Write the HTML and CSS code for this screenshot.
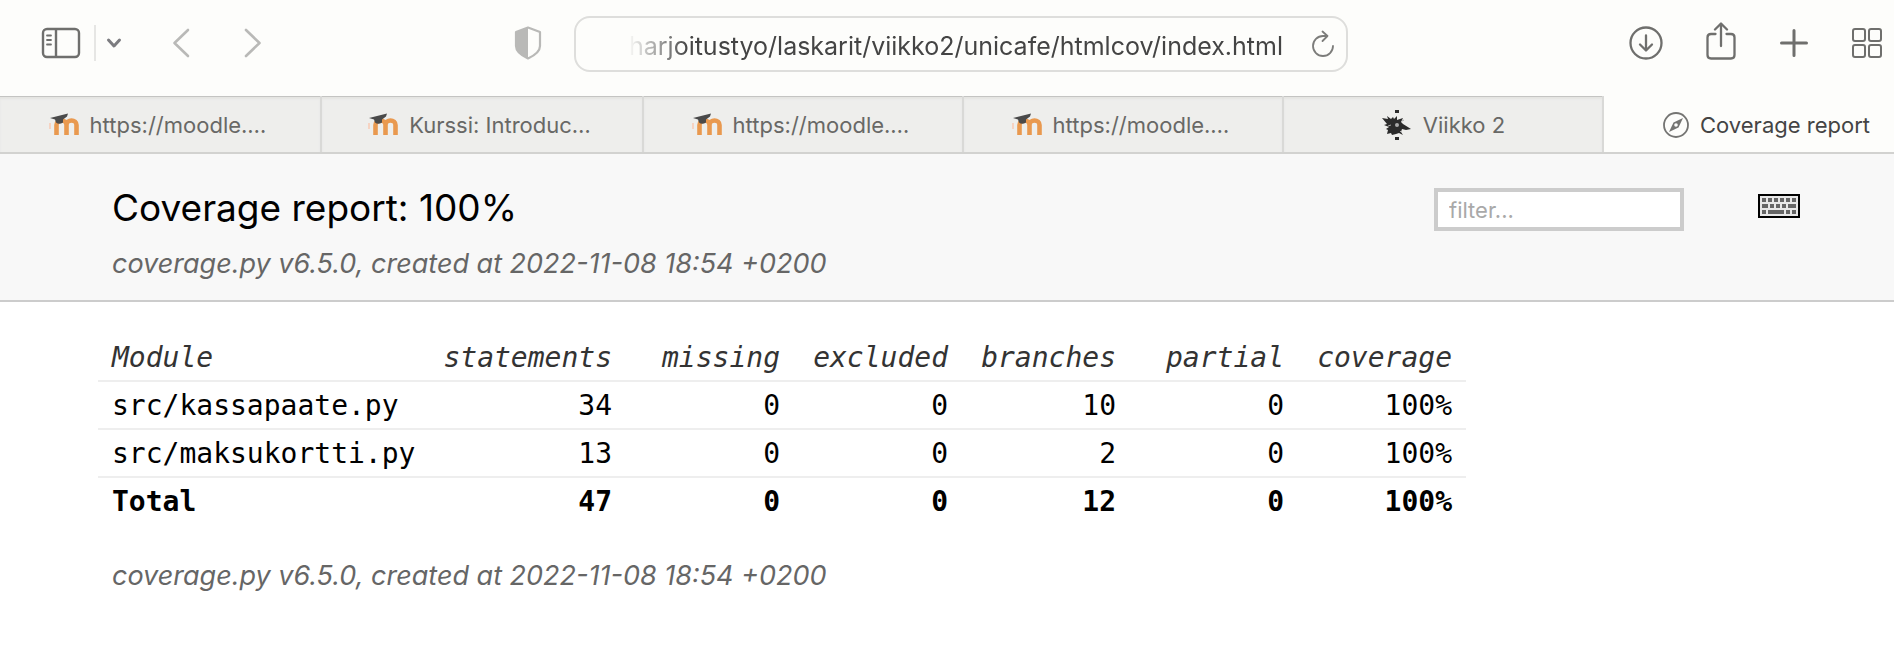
FILE: index.html
```html
<!DOCTYPE html>
<html lang="en">
<head>
<meta charset="utf-8">
<title>Coverage report</title>
<link rel="stylesheet" href="styles.css">
</head>
<body>
<svg class="defs" aria-hidden="true">
  <symbol id="moodle" viewBox="0 0 32 24">
    <path d="M2 10v6" stroke="#f6d3c2" stroke-width="2" fill="none"/>
    <path d="M8.500 22V12M8.500 12a5 4.500 0 0 1 10 0V22M18.500 12a5 4.500 0 0 1 10 0V22" fill="none" stroke="#e9994f" stroke-width="4.600"/>
    <path d="M2 5 20 0.500l-1 3-4 3v3q-4 2.500-7 0l-1-3z" fill="#4a4a4a"/>
  </symbol>
</svg>
<header class="toolbar">
  <div class="tools-left">
    <button class="tool" aria-label="Sidebar"><svg width="40" height="32" viewBox="0 0 40 32"><g fill="none" stroke="#6f6f6d" stroke-width="2.400"><rect x="2" y="2" width="36" height="28" rx="4"/><path d="M15 2v28"/><path d="M6 8.500h4M6 13h4M6 17.500h4" stroke-width="1.800" stroke-linecap="round"/></g></svg></button>
    <span class="rule"></span>
    <button class="tool" aria-label="Tab groups"><svg width="16" height="12" viewBox="0 0 16 12"><path d="M2.500 3 8 9l5.500-6" fill="none" stroke="#7c7c80" stroke-width="3" stroke-linecap="round" stroke-linejoin="round"/></svg></button>
    <button class="tool back" aria-label="Back"><svg width="18" height="30" viewBox="0 0 18 30"><path d="M16 2 2.500 15 16 28" fill="none" stroke="#b9b9b7" stroke-width="2.600" stroke-linecap="round" stroke-linejoin="round"/></svg></button>
    <button class="tool forward" aria-label="Forward"><svg width="18" height="30" viewBox="0 0 18 30"><path d="M2 2l13.500 13L2 28" fill="none" stroke="#b9b9b7" stroke-width="2.600" stroke-linecap="round" stroke-linejoin="round"/></svg></button>
    <button class="tool shield" aria-label="Privacy report"><svg width="28" height="34" viewBox="0 0 28 34"><path d="M14 1.500 26 6v14q0 7-12 12.500Q2 27 2 20V6z" fill="none" stroke="#b9b9b7" stroke-width="2.200" stroke-linejoin="round"/><path d="M14 1.500V32.500Q2 27 2 20V6z" fill="#b9b9b7"/></svg></button>
  </div>
  <div class="address">
    <input class="url" type="text" aria-label="Address" value="harjoitustyo/laskarit/viikko2/unicafe/htmlcov/index.html">
    <button class="tool" aria-label="Reload"><svg width="24" height="28" viewBox="0 0 24 28"><g fill="none" stroke="#7c7c7a" stroke-width="1.800" stroke-linecap="round" stroke-linejoin="round"><path d="M22 16a10 10 0 1 1-10-10h4"/><path d="M11.500 1.500 16.500 6l-5 5"/></g></svg></button>
  </div>
  <div class="tools-right">
    <button class="tool" aria-label="Downloads"><svg width="34" height="34" viewBox="0 0 34 34"><g fill="none" stroke="#6f6f6d" stroke-width="2.300" stroke-linecap="round" stroke-linejoin="round"><circle cx="17" cy="17" r="15.500"/><path d="M17 9.500v15M11 18.500l6 6 6-6"/></g></svg></button>
    <button class="tool share" aria-label="Share"><svg width="30" height="38" viewBox="0 0 30 38"><g fill="none" stroke="#6f6f6d" stroke-width="2.300" stroke-linecap="round" stroke-linejoin="round"><path d="M9.500 12H5q-3.500 0-3.500 3.500V33q0 3.500 3.500 3.500h20q3.500 0 3.500-3.500V15.500Q28.500 12 25 12h-4.500"/><path d="M15 24V2M9 7.500 15 1.500l6 6"/></g></svg></button>
    <button class="tool" aria-label="New tab"><svg width="30" height="30" viewBox="0 0 30 30"><path d="M15 2.500v25M2.500 15h25" stroke="#6f6f6d" stroke-width="3" stroke-linecap="round"/></svg></button>
    <button class="tool" aria-label="Tab overview"><svg width="30" height="30" viewBox="0 0 30 30"><g fill="none" stroke="#6f6f6d" stroke-width="2"><rect x="1" y="1" width="12" height="12" rx="2"/><rect x="17" y="1" width="12" height="12" rx="2"/><rect x="1" y="17" width="12" height="12" rx="2"/><rect x="17" y="17" width="12" height="12" rx="2"/></g></svg></button>
  </div>
</header>
<nav class="tabs" aria-label="Tabs">
  <button class="tab cut"><svg width="32" height="24"><use href="#moodle"/></svg><span>https://moodle.…</span></button>
  <button class="tab cut"><svg width="32" height="24"><use href="#moodle"/></svg><span>Kurssi: Introduc…</span></button>
  <button class="tab cut"><svg width="32" height="24"><use href="#moodle"/></svg><span>https://moodle.…</span></button>
  <button class="tab cut"><svg width="32" height="24"><use href="#moodle"/></svg><span>https://moodle.…</span></button>
  <button class="tab"><svg width="32" height="32" viewBox="0 0 32 32"><path d="M14 1h4v3h-4zM14 28h4v3h-4zM1 9l6 1-1-3 4 3 2-2 1 2 3-3v4l6-2-2 4 2 2 8 5-5 1-4-1-1 3 2 3-4-2-3 1-4 1-1-2-4 1 1-4-2-1 3-2-5-2 3-1z" fill="#2b2b2b"/><circle cx="16" cy="16" r="2" fill="#aaa"/><path d="M7 17l3-1M19 22l2 2M21 12l2-1" stroke="#aaa"/></svg><span>Viikko 2</span></button>
  <button class="tab active"><svg width="28" height="28" viewBox="0 0 28 28"><circle cx="14" cy="14" r="12" fill="none" stroke="#747472" stroke-width="1.800"/><path d="M21 7l-4.500 9.500L7 21l4.500-9.500z" fill="#747472"/><circle cx="14" cy="14" r="1.800" fill="#fdfdfb"/></svg><span>Coverage report</span></button>
</nav>
<main>
  <section class="report-head">
    <div>
      <h1>Coverage report: 100%</h1>
      <p class="meta">coverage.py v6.5.0, created at 2022-11-08 18:54 +0200</p>
    </div>
    <form class="controls">
      <input class="filter" type="text" placeholder="filter..." aria-label="filter">
      <button class="tool keys" type="button" aria-label="Keyboard shortcuts"><svg width="42" height="24" viewBox="0 0 42 24"><rect x="1" y="1" width="40" height="22" fill="#e8e8e8" stroke="#000" stroke-width="2"/><path d="M4 6h4m2 0h4m2 0h4m2 0h4m2 0h4m2 0h4M4 12h6m2 0h4m2 0h4m2 0h4m2 0h8M4 18h4m2 0h16m2 0h4m2 0h4" fill="none" stroke="#666" stroke-width="4"/></svg></button>
    </form>
  </section>
  <section class="report-body">
    <table>
      <thead><tr><th>Module</th><th>statements</th><th>missing</th><th>excluded</th><th>branches</th><th>partial</th><th>coverage</th></tr></thead>
      <tbody>
        <tr><td>src/kassapaate.py</td><td>34</td><td>0</td><td>0</td><td>10</td><td>0</td><td>100%</td></tr>
        <tr><td>src/maksukortti.py</td><td>13</td><td>0</td><td>0</td><td>2</td><td>0</td><td>100%</td></tr>
      </tbody>
      <tfoot><tr><td>Total</td><td>47</td><td>0</td><td>0</td><td>12</td><td>0</td><td>100%</td></tr></tfoot>
    </table>
    <p class="meta foot">coverage.py v6.5.0, created at 2022-11-08 18:54 +0200</p>
  </section>
</main>
</body>
</html>
```
FILE: styles.css
```css
* { box-sizing: border-box; }
body { margin: 0; background: #fff; color: #000; font-family: Inter, "Liberation Sans", sans-serif; }
svg { display: block; flex: none; }
button { font: inherit; color: inherit; border: 0; background: none; padding: 0; }
.defs { display: none; }

.toolbar { display: grid; grid-template-columns: minmax(0, 574fr) minmax(0, 774fr) minmax(0, 546fr); align-items: center; padding: 16px 0 24px; background: #fdfdfb; }
.tools-left, .tools-right { display: flex; align-items: center; padding-bottom: 2px; }
.tools-left { padding-left: 41px; padding-right: 32px; }
.rule { width: 2px; height: 36px; margin: 0 10px 0 13px; background: #e6e6e4; }
.back { margin-left: 50px; }
.forward { margin-left: 54px; }
.shield { margin-left: auto; }
.tools-right { justify-content: flex-end; gap: 43px; padding-right: 12px; }
.share { padding-bottom: 4px; }

.address { display: flex; align-items: center; height: 56px; padding: 0 11px 0 40px; border: 2px solid #dededc; border-radius: 16px; }
.url { flex: 1; min-width: 0; padding: 3px 28px 0 0; border: 0; outline: 0; background: none; color: #444; font: 25px/32px Inter, "Liberation Sans", sans-serif; text-align: right; -webkit-mask-image: linear-gradient(to right, transparent 12px, #000 72px); mask-image: linear-gradient(to right, transparent 12px, #000 72px); }

.tabs { display: grid; grid-template-columns: minmax(0, 322fr) minmax(0, 322fr) repeat(3, minmax(0, 320fr)) minmax(0, 290fr); height: 58px; background: #eeeeec; border-bottom: 2px solid #d2d2d0; }
.tab { display: flex; align-items: center; justify-content: center; gap: 10px; padding-top: 2px; border-right: 2px solid #d9d9d7; box-shadow: inset 0 1px 0 #c4c4c2, inset 0 3px 2px #e4e4e2; color: #686866; font-size: 22px; white-space: nowrap; }
.cut { padding-right: 6px; }
.active { padding-left: 34px; border-right: 0; box-shadow: none; background: #fdfdfb; color: #444; }

.report-head { display: flex; justify-content: space-between; align-items: flex-start; padding: 30px 94px 16px 112px; background: #f8f8f8; border-bottom: 2px solid #ccc; }
h1 { margin: 0 0 12px; font-size: 37px; line-height: 48px; font-weight: 400; }
.meta { margin: 0; color: #666; font-size: 27px; line-height: 40px; font-style: italic; }
.controls { display: flex; align-items: flex-start; gap: 74px; padding-top: 4px; }
.filter { width: 250px; height: 43px; padding: 0 11px; border: 4px solid #ccc; border-radius: 0; background: #fff; font: 22px/32px Inter, "Liberation Sans", sans-serif; }
.filter::placeholder { color: #a9a9a9; opacity: 1; }
.keys { padding-top: 6px; }

.report-body { padding: 32px 98px; }
table { border-collapse: collapse; font: 28px/32px "DejaVu Sans Mono", monospace; }
th, td { min-width: 168px; padding: 8px 14px 6px; border-bottom: 2px solid #eee; text-align: right; }
th { color: #333; font-weight: 400; font-style: italic; }
th:first-child, td:first-child { text-align: left; }
tfoot td { font-weight: 700; border-bottom: 0; }
.foot { padding: 32px 14px 0; }
```
